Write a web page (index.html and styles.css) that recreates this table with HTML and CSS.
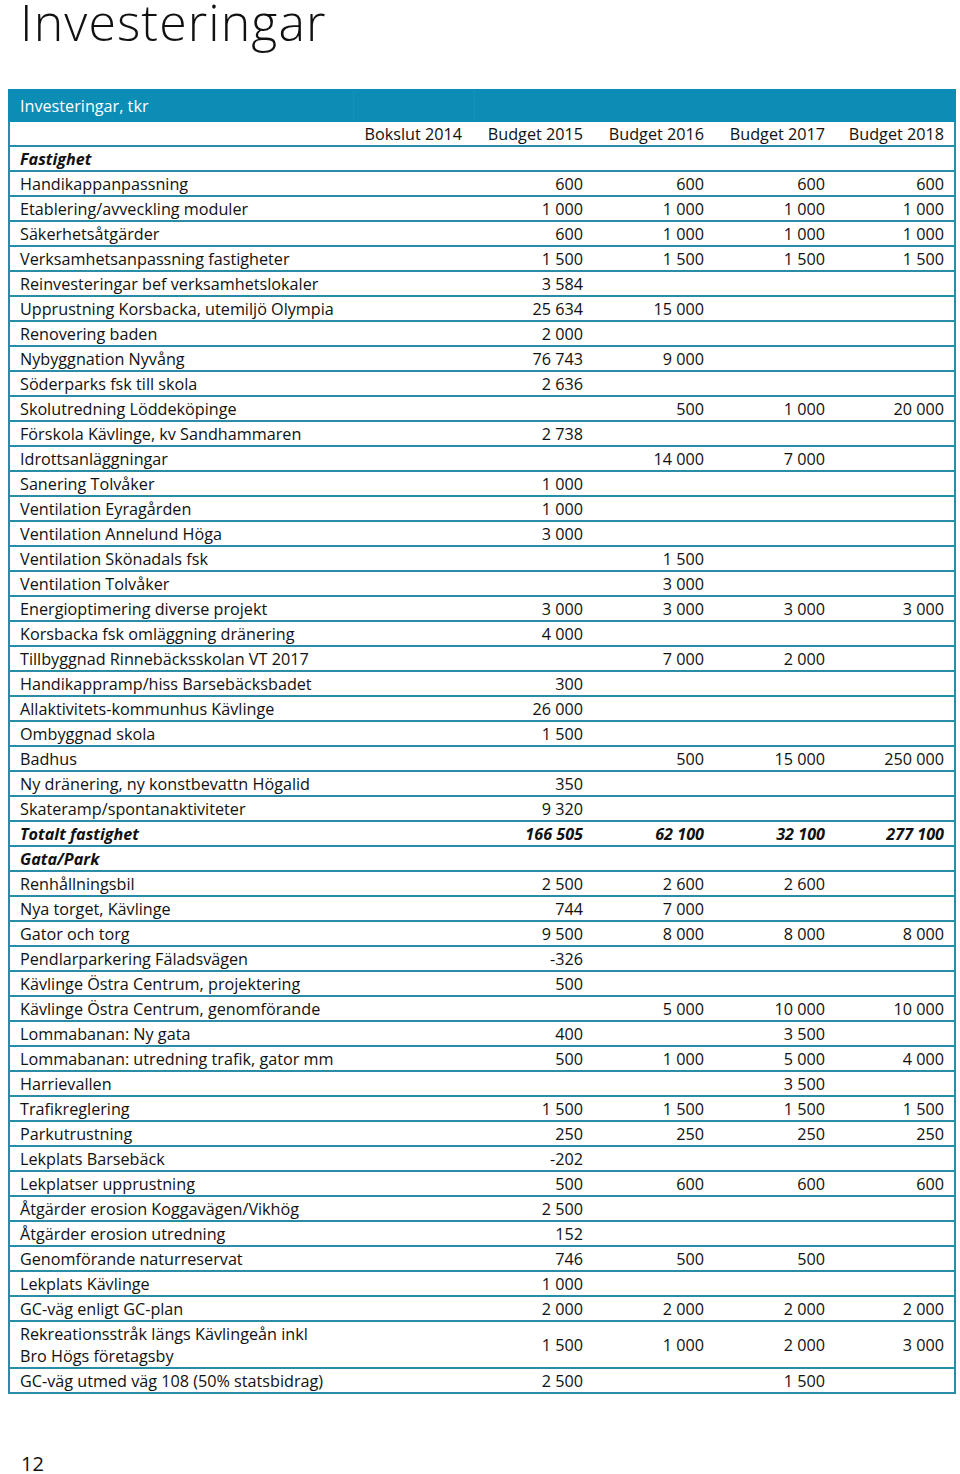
FILE: index.html
```html
<!DOCTYPE html>
<html lang="sv">
<head>
<meta charset="utf-8">
<title>Investeringar</title>
<link rel="stylesheet" href="styles.css">
</head>
<body>
<h1 class="title">Investeringar</h1>
<table class="inv">
  <colgroup>
    <col class="c-label"><col class="c-num"><col class="c-num"><col class="c-num"><col class="c-num"><col class="c-last">
  </colgroup>
  <thead>
    <tr class="band"><th class="lbl">Investeringar, tkr</th><th class="sep"></th><th class="sep"></th><th></th><th></th><th></th></tr>
    <tr class="colhead"><th></th><th>Bokslut 2014</th><th>Budget 2015</th><th>Budget 2016</th><th>Budget 2017</th><th>Budget 2018</th></tr>
  </thead>
  <tbody>
    <tr class="strong"><td>Fastighet</td><td></td><td></td><td></td><td></td><td></td></tr>
    <tr><td>Handikappanpassning</td><td></td><td>600</td><td>600</td><td>600</td><td>600</td></tr>
    <tr><td>Etablering/avveckling moduler</td><td></td><td>1&nbsp;000</td><td>1&nbsp;000</td><td>1&nbsp;000</td><td>1&nbsp;000</td></tr>
    <tr><td>Säkerhetsåtgärder</td><td></td><td>600</td><td>1&nbsp;000</td><td>1&nbsp;000</td><td>1&nbsp;000</td></tr>
    <tr><td>Verksamhetsanpassning fastigheter</td><td></td><td>1&nbsp;500</td><td>1&nbsp;500</td><td>1&nbsp;500</td><td>1&nbsp;500</td></tr>
    <tr><td>Reinvesteringar bef verksamhetslokaler</td><td></td><td>3&nbsp;584</td><td></td><td></td><td></td></tr>
    <tr><td>Upprustning Korsbacka, utemiljö Olympia</td><td></td><td>25&nbsp;634</td><td>15&nbsp;000</td><td></td><td></td></tr>
    <tr><td>Renovering baden</td><td></td><td>2&nbsp;000</td><td></td><td></td><td></td></tr>
    <tr><td>Nybyggnation Nyvång</td><td></td><td>76&nbsp;743</td><td>9&nbsp;000</td><td></td><td></td></tr>
    <tr><td>Söderparks fsk till skola</td><td></td><td>2&nbsp;636</td><td></td><td></td><td></td></tr>
    <tr><td>Skolutredning Löddeköpinge</td><td></td><td></td><td>500</td><td>1&nbsp;000</td><td>20&nbsp;000</td></tr>
    <tr><td>Förskola Kävlinge, kv Sandhammaren</td><td></td><td>2&nbsp;738</td><td></td><td></td><td></td></tr>
    <tr><td>Idrottsanläggningar</td><td></td><td></td><td>14&nbsp;000</td><td>7&nbsp;000</td><td></td></tr>
    <tr><td>Sanering Tolvåker</td><td></td><td>1&nbsp;000</td><td></td><td></td><td></td></tr>
    <tr><td>Ventilation Eyragården</td><td></td><td>1&nbsp;000</td><td></td><td></td><td></td></tr>
    <tr><td>Ventilation Annelund Höga</td><td></td><td>3&nbsp;000</td><td></td><td></td><td></td></tr>
    <tr><td>Ventilation Skönadals fsk</td><td></td><td></td><td>1&nbsp;500</td><td></td><td></td></tr>
    <tr><td>Ventilation Tolvåker</td><td></td><td></td><td>3&nbsp;000</td><td></td><td></td></tr>
    <tr><td>Energioptimering diverse projekt</td><td></td><td>3&nbsp;000</td><td>3&nbsp;000</td><td>3&nbsp;000</td><td>3&nbsp;000</td></tr>
    <tr><td>Korsbacka fsk omläggning dränering</td><td></td><td>4&nbsp;000</td><td></td><td></td><td></td></tr>
    <tr><td>Tillbyggnad Rinnebäcksskolan VT 2017</td><td></td><td></td><td>7&nbsp;000</td><td>2&nbsp;000</td><td></td></tr>
    <tr><td>Handikappramp/hiss Barsebäcksbadet</td><td></td><td>300</td><td></td><td></td><td></td></tr>
    <tr><td>Allaktivitets-kommunhus Kävlinge</td><td></td><td>26&nbsp;000</td><td></td><td></td><td></td></tr>
    <tr><td>Ombyggnad skola</td><td></td><td>1&nbsp;500</td><td></td><td></td><td></td></tr>
    <tr><td>Badhus</td><td></td><td></td><td>500</td><td>15&nbsp;000</td><td>250&nbsp;000</td></tr>
    <tr><td>Ny dränering, ny konstbevattn Högalid</td><td></td><td>350</td><td></td><td></td><td></td></tr>
    <tr><td>Skateramp/spontanaktiviteter</td><td></td><td>9&nbsp;320</td><td></td><td></td><td></td></tr>
    <tr class="strong"><td>Totalt fastighet</td><td></td><td>166&nbsp;505</td><td>62&nbsp;100</td><td>32&nbsp;100</td><td>277&nbsp;100</td></tr>
    <tr class="strong"><td>Gata/Park</td><td></td><td></td><td></td><td></td><td></td></tr>
    <tr><td>Renhållningsbil</td><td></td><td>2&nbsp;500</td><td>2&nbsp;600</td><td>2&nbsp;600</td><td></td></tr>
    <tr><td>Nya torget, Kävlinge</td><td></td><td>744</td><td>7&nbsp;000</td><td></td><td></td></tr>
    <tr><td>Gator och torg</td><td></td><td>9&nbsp;500</td><td>8&nbsp;000</td><td>8&nbsp;000</td><td>8&nbsp;000</td></tr>
    <tr><td>Pendlarparkering Fäladsvägen</td><td></td><td>-326</td><td></td><td></td><td></td></tr>
    <tr><td>Kävlinge Östra Centrum, projektering</td><td></td><td>500</td><td></td><td></td><td></td></tr>
    <tr><td>Kävlinge Östra Centrum, genomförande</td><td></td><td></td><td>5&nbsp;000</td><td>10&nbsp;000</td><td>10&nbsp;000</td></tr>
    <tr><td>Lommabanan: Ny gata</td><td></td><td>400</td><td></td><td>3&nbsp;500</td><td></td></tr>
    <tr><td>Lommabanan: utredning trafik, gator mm</td><td></td><td>500</td><td>1&nbsp;000</td><td>5&nbsp;000</td><td>4&nbsp;000</td></tr>
    <tr><td>Harrievallen</td><td></td><td></td><td></td><td>3&nbsp;500</td><td></td></tr>
    <tr><td>Trafikreglering</td><td></td><td>1&nbsp;500</td><td>1&nbsp;500</td><td>1&nbsp;500</td><td>1&nbsp;500</td></tr>
    <tr><td>Parkutrustning</td><td></td><td>250</td><td>250</td><td>250</td><td>250</td></tr>
    <tr><td>Lekplats Barsebäck</td><td></td><td>-202</td><td></td><td></td><td></td></tr>
    <tr><td>Lekplatser upprustning</td><td></td><td>500</td><td>600</td><td>600</td><td>600</td></tr>
    <tr><td>Åtgärder erosion Koggavägen/Vikhög</td><td></td><td>2&nbsp;500</td><td></td><td></td><td></td></tr>
    <tr><td>Åtgärder erosion utredning</td><td></td><td>152</td><td></td><td></td><td></td></tr>
    <tr><td>Genomförande naturreservat</td><td></td><td>746</td><td>500</td><td>500</td><td></td></tr>
    <tr><td>Lekplats Kävlinge</td><td></td><td>1&nbsp;000</td><td></td><td></td><td></td></tr>
    <tr><td>GC-väg enligt GC-plan</td><td></td><td>2&nbsp;000</td><td>2&nbsp;000</td><td>2&nbsp;000</td><td>2&nbsp;000</td></tr>
    <tr><td>Rekreationsstråk längs Kävlingeån inkl<br>Bro Högs företagsby</td><td></td><td>1&nbsp;500</td><td>1&nbsp;000</td><td>2&nbsp;000</td><td>3&nbsp;000</td></tr>
    <tr><td>GC-väg utmed väg 108 (50% statsbidrag)</td><td></td><td>2&nbsp;500</td><td></td><td>1&nbsp;500</td><td></td></tr>
  </tbody>
</table>
<p class="pageno">12</p>
</body>
</html>
```

FILE: styles.css
```css
html, body {
  margin: 0;
  padding: 0;
  background: #ffffff;
}

body {
  font-family: "Open Sans", "Noto Sans", "DejaVu Sans", sans-serif;
  color: #111111;
}

.title {
  margin: 0 0 44px 0;
  padding: 0 0 0 20px;
  font-size: 50px;
  line-height: 45px;
  font-weight: 300;
  letter-spacing: 1.1px;
  color: #111111;
}

.inv {
  margin-left: 8px;
  width: 946px;
  table-layout: fixed;
  border-collapse: collapse;
  border: 2px solid #2a8ca6;
  font-size: 16.2px;
}

.c-label { width: 344px; }
.c-num { width: 121px; }
.c-last { width: 118px; }

.inv th,
.inv td {
  padding: 1px 12px 0 10px;
  line-height: 22px;
  border-bottom: 2px solid #2a8ca6;
  text-align: right;
  font-weight: 400;
  white-space: nowrap;
  vertical-align: middle;
}

.inv td:first-child,
.inv th:first-child {
  text-align: left;
}

.inv td:last-child,
.inv th:last-child {
  padding-right: 10px;
}

.band th {
  background: #0b8db5;
  color: #ffffff;
  height: 29px;
  padding: 0 10px;
  border-top: 2px solid #0b8db5;
  border-bottom: 2px solid #0b8db5;
}

.band th.sep {
  border-left: 1px solid #1792b9;
}

.band th:first-child {
  border-left: 2px solid #0b8db5;
}

.band th:last-child {
  border-right: 2px solid #0b8db5;
}

.colhead th {
  color: #111111;
}

.strong td {
  font-weight: 700;
  font-style: italic;
}

.pageno {
  margin: 60px 0 0 21px;
  font-size: 20px;
  line-height: 20px;
  color: #111111;
}
```
